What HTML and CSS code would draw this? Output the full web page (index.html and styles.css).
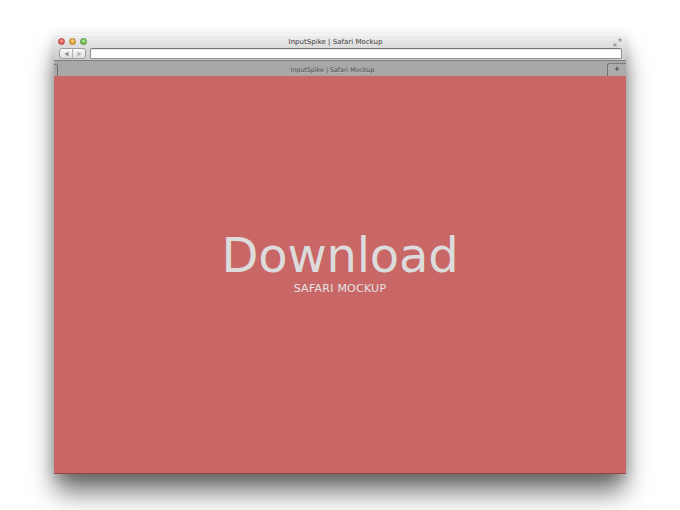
FILE: index.html
```html
<!DOCTYPE html>
<html>
<head>
<meta charset="utf-8">
<link rel="stylesheet" href="styles.css">
</head>
<body>
<div class="window">
  <div class="chrome">
    <div class="titlebar">
      <div class="lights">
        <span class="light red"></span>
        <span class="light yellow"></span>
        <span class="light green"></span>
      </div>
      <div class="title">InputSpike | Safari Mockup</div>
      <svg class="resize" width="9" height="9" viewBox="0 0 9 9">
        <path d="M5.2 1.2H7.8V3.8M7.8 1.2L5.4 3.6M1.2 5.2V7.8H3.8M1.2 7.8L3.6 5.4" fill="none" stroke="#8c8c8c" stroke-width="1"/>
      </svg>
    </div>
    <div class="toolbar">
      <div class="navbtns">
        <span class="nav"><svg width="5" height="6" viewBox="0 0 5 6"><path d="M4.5 0.5V5.5L0.5 3Z" fill="#8e8e8e"/></svg></span>
        <span class="nav"><svg width="5" height="6" viewBox="0 0 5 6"><path d="M0.5 0.5V5.5L4.5 3Z" fill="#b4b4b4"/></svg></span>
      </div>
      <div class="url"></div>
    </div>
  </div>
  <div class="tabbar">
    <span class="tabedge"></span>
    <span class="tabtitle">InputSpike | Safari Mockup</span>
    <span class="newtab">+</span>
  </div>
  <div class="content">
    <div class="headline">Download</div>
    <div class="sub">SAFARI MOCKUP</div>
  </div>
</div>
</body>
</html>
```
FILE: styles.css
```css
html, body {
  margin: 0;
  padding: 0;
  background: #ffffff;
}
body {
  width: 680px;
  height: 510px;
  overflow: hidden;
  padding: 34px 0 0 54px;
  box-sizing: border-box;
  font-family: "DejaVu Sans", "Noto Sans", sans-serif;
}
.window {
  width: 572px;
  display: flex;
  flex-direction: column;
  border-radius: 4px 4px 0 0;
  box-shadow: 0 20px 26px -2px rgba(0, 0, 0, 0.55), 0 4px 14px rgba(0, 0, 0, 0.2);
}
.chrome {
  height: 25px;
  border-radius: 4px 4px 0 0;
  background: linear-gradient(#efefef, #dcdcdc 50%, #cbcbcb);
  border-top: 1px solid #f8f8f8;
  border-bottom: 1px solid #7d7d7d;
  display: flex;
  flex-direction: column;
}
.titlebar {
  height: 13px;
  display: flex;
  align-items: center;
  padding: 0 4px 0 4px;
}
.lights {
  display: flex;
  gap: 4px;
  width: 160px;
  margin-top: 1px;
}
.light {
  width: 7px;
  height: 7px;
  border-radius: 50%;
  box-sizing: border-box;
}
.red {
  background: radial-gradient(circle at 50% 35%, #f7a8a5, #e45d5a 60%, #c9413f);
  border: 0.5px solid #b8403d;
}
.yellow {
  background: radial-gradient(circle at 50% 35%, #fbd996, #e9a63a 60%, #c98822);
  border: 0.5px solid #b67e22;
}
.green {
  background: radial-gradient(circle at 50% 35%, #bdeeae, #6dc14d 60%, #4e9f34);
  border: 0.5px solid #4a8f33;
}
.title {
  flex: 1;
  text-align: center;
  font-size: 7px;
  color: #3a3a3a;
  margin-left: -160px;
  margin-top: 1px;
  letter-spacing: 0.02px;
}
.resize {
  display: block;
  margin-top: 2px;
}
.toolbar {
  height: 12px;
  display: flex;
  align-items: flex-start;
  padding: 1px 4px 0 5px;
  gap: 4px;
}
.navbtns {
  display: flex;
  width: 27px;
  height: 11px;
  box-sizing: border-box;
  border: 1px solid #9c9c9c;
  border-radius: 3px;
  background: linear-gradient(#fbfbfb, #dedede);
  overflow: hidden;
}
.nav {
  flex: 1;
  display: flex;
  align-items: center;
  justify-content: center;
}
.nav + .nav {
  border-left: 1px solid #b0b0b0;
}
.nav svg {
  display: block;
}
.url {
  flex: 1;
  height: 11px;
  box-sizing: border-box;
  background: #ffffff;
  border: 1px solid #8e8e8e;
  border-top-color: #767676;
  border-radius: 2px;
  box-shadow: inset 0 1px 1px rgba(0, 0, 0, 0.12);
}
.tabbar {
  height: 15px;
  background: #a8a8a8;
  display: flex;
  align-items: flex-end;
}
.tabedge {
  width: 4px;
  height: 12px;
  box-sizing: border-box;
  border-top: 1px solid #7c7c7c;
  border-right: 1px solid #6f6f6f;
  border-top-right-radius: 2px;
}
.tabtitle {
  flex: 1;
  text-align: center;
  font-size: 6.3px;
  color: #4a4a4a;
  align-self: center;
  margin-top: 1px;
  text-shadow: 0 1px 0 rgba(255, 255, 255, 0.25);
}
.newtab {
  width: 19px;
  height: 13px;
  box-sizing: border-box;
  border-top: 1px solid #7c7c7c;
  border-left: 1px solid #6f6f6f;
  border-top-left-radius: 3px;
  background: #acacac;
  font-size: 7px;
  line-height: 11px;
  text-align: center;
  color: #3c3c3c;
  font-weight: bold;
}
.content {
  height: 398px;
  background: #c96767;
  display: flex;
  flex-direction: column;
  align-items: center;
  padding-top: 155px;
  box-sizing: border-box;
  box-shadow: inset 0 -1px 0 rgba(0, 0, 0, 0.3);
}
.headline {
  font-size: 48px;
  line-height: 48px;
  color: #dcdcdc;
  letter-spacing: -0.2px;
}
.sub {
  margin-top: 4px;
  font-size: 11px;
  line-height: 11px;
  color: #e3e3e3;
  letter-spacing: 0.25px;
}
```
